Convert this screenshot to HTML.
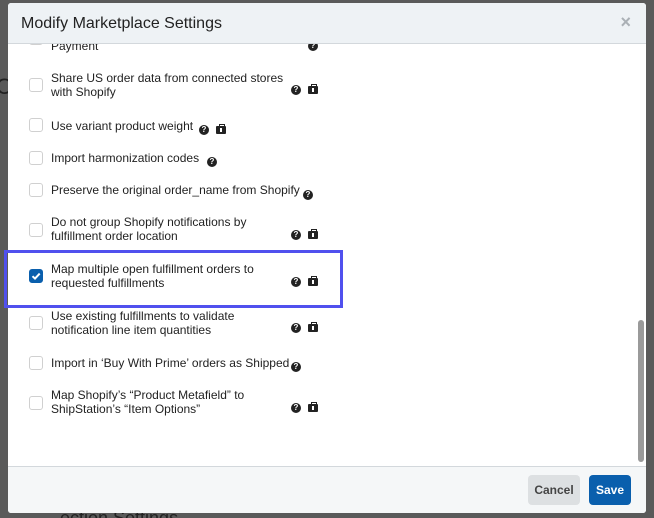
<!DOCTYPE html>
<html><head><style>
*{margin:0;padding:0;box-sizing:border-box}
html,body{width:654px;height:518px;overflow:hidden}
body{background:#5a5a5a;position:relative;font-family:"Liberation Sans",Arial,sans-serif}
.bgt{position:absolute;color:#222;font-size:22px}
.modal{position:absolute;left:8px;top:3px;width:638px;height:510px;background:#fff;border-radius:3px;overflow:hidden}
.hdr{position:absolute;left:0;top:0;width:638px;height:41px;background:#eef2f5;border-bottom:1px solid #d3d8dc;z-index:2}
.hdr .t{position:absolute;left:13px;top:12px;font-size:16px;color:#222}
.hdr .x{position:absolute;right:15px;top:9px;font-size:18px;color:#aab0b5;font-weight:bold}
.ftr{position:absolute;left:0;top:463px;width:638px;height:47px;background:#f5f7f8;border-top:1px solid #d3d8dc}
.cb{position:absolute;left:21px;width:14px;height:14px;border:1px solid #d0d0d0;border-radius:3px;background:#fff}
.cb.on{background:#0a5fad;border-color:#0a5fad}
.lbl{position:absolute;left:43px;font-size:12px;line-height:14px;color:#222}
.q,.b{position:absolute;width:10px;height:10px}
.q{border-radius:50%;background:#222;color:#fff;font-size:8px;font-weight:bold;text-align:center;line-height:10px}
.b{background:#222;border-radius:1px;height:8px}
.b:before{content:"";position:absolute;left:3px;top:-2px;width:4px;height:2px;border:1px solid #222;border-bottom:none}
.b:after{content:"";position:absolute;left:4px;top:2px;width:2px;height:4px;background:#fff}
.scroll{position:absolute;left:630px;top:317px;width:6px;height:142px;background:#9a9a9a;border-radius:3px}
.btn{position:absolute;top:472px;height:30px;border-radius:4px;font-size:12px;font-weight:bold;text-align:center;line-height:30px}
</style></head><body>
<div class="bgt" style="left:-4px;top:74px">C</div>
<div class="bgt" style="left:60px;top:508px;font-size:18px">ection Settings</div>
<div class="modal">
<div class="hdr"><div class="t">Modify Marketplace Settings</div><div class="x">×</div></div>
<div class="cb" style="top:28px"></div><div class="lbl" style="top:36px">Payment</div><div class="q" style="left:300px;top:38px">?</div>
<div class="cb" style="top:75px"></div><div class="lbl" style="top:68px">Share US order data from connected stores<br>with Shopify</div>
<div class="q" style="left:283px;top:82px">?</div><div class="b" style="left:300px;top:83px"></div>
<div class="cb" style="top:115px"></div><div class="lbl" style="top:116px">Use variant product weight</div>
<div class="q" style="left:191px;top:122px">?</div><div class="b" style="left:208px;top:123px"></div>
<div class="cb" style="top:148px"></div><div class="lbl" style="top:148px">Import harmonization codes</div>
<div class="q" style="left:199px;top:154px">?</div>
<div class="cb" style="top:180px"></div><div class="lbl" style="top:180px">Preserve the original order_name from Shopify</div>
<div class="q" style="left:295px;top:187px">?</div>
<div class="cb" style="top:220px"></div><div class="lbl" style="top:212px">Do not group Shopify notifications by<br>fulfillment order location</div>
<div class="q" style="left:283px;top:227px">?</div><div class="b" style="left:300px;top:228px"></div>
<div class="cb on" style="top:266px"><svg width="12" height="12" viewBox="0 0 12 12" style="position:absolute;left:0;top:0"><path d="M2.5 6.2L5 8.6L9.7 3.6" stroke="#fff" stroke-width="2" fill="none"/></svg></div>
<div class="lbl" style="top:259px">Map multiple open fulfillment orders to<br>requested fulfillments</div>
<div class="q" style="left:283px;top:274px">?</div><div class="b" style="left:300px;top:275px"></div>
<div class="cb" style="top:313px"></div><div class="lbl" style="top:306px">Use existing fulfillments to validate<br>notification line item quantities</div>
<div class="q" style="left:283px;top:320px">?</div><div class="b" style="left:300px;top:321px"></div>
<div class="cb" style="top:353px"></div><div class="lbl" style="top:353px">Import in ‘Buy With Prime’ orders as Shipped</div>
<div class="q" style="left:283px;top:359px">?</div>
<div class="cb" style="top:393px"></div><div class="lbl" style="top:385px">Map Shopify’s “Product Metafield” to<br>ShipStation’s “Item Options”</div>
<div class="q" style="left:283px;top:400px">?</div><div class="b" style="left:300px;top:401px"></div>
<div class="scroll"></div>
<div class="ftr"></div>
<div class="btn" style="left:520px;width:52px;background:#dde0e2;color:#444">Cancel</div>
<div class="btn" style="left:581px;width:42px;background:#0a5fad;color:#fff">Save</div>
</div>
<div style="position:absolute;left:4px;top:250px;width:339px;height:58px;border:3px solid #5050ee"></div>
</body></html>
